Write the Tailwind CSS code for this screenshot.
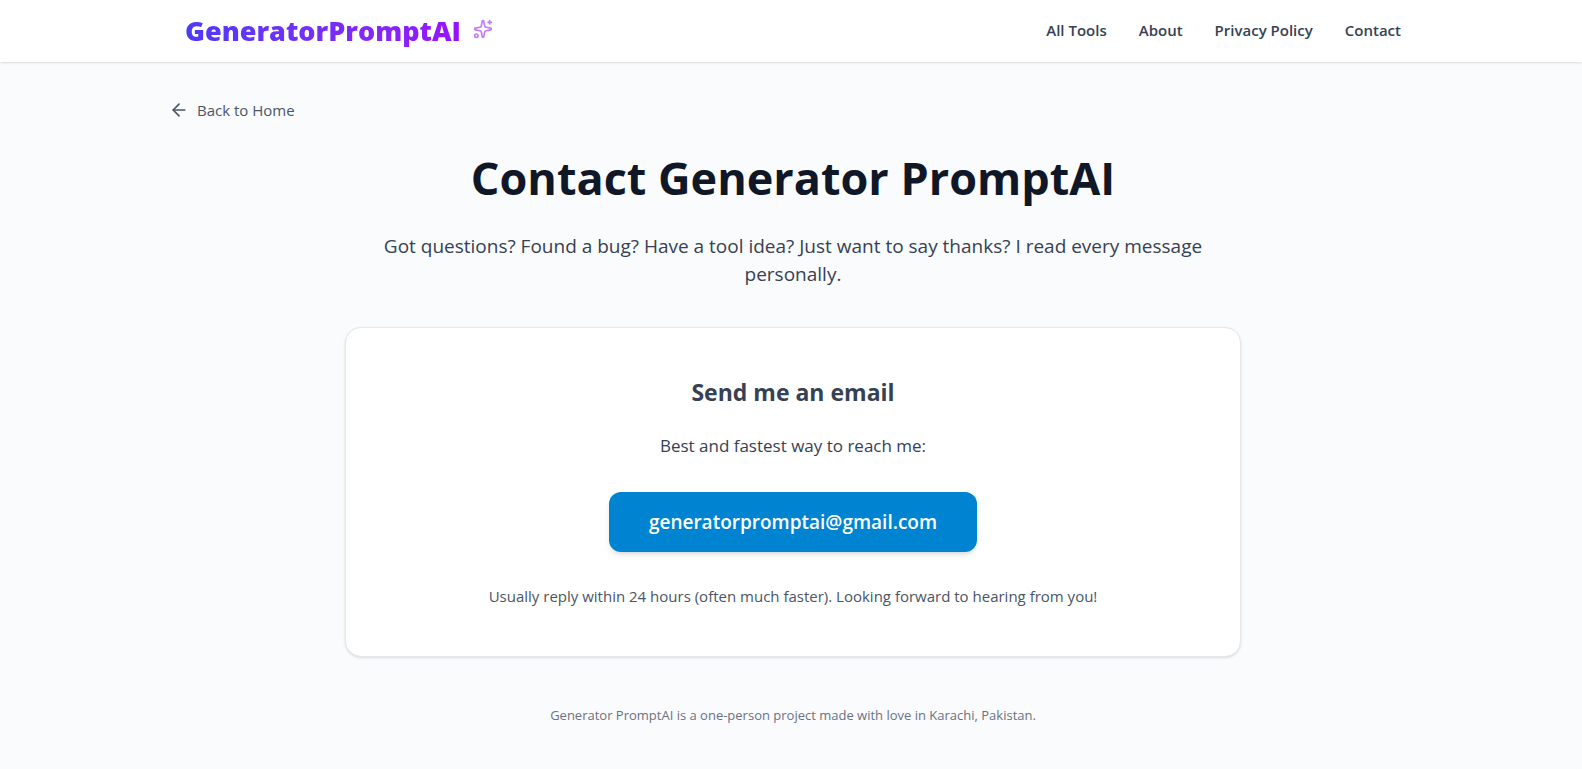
<!DOCTYPE html>
<html lang="en">
<head>
<meta charset="utf-8">
<meta name="viewport" content="width=device-width, initial-scale=1">
<title>Contact Generator PromptAI</title>
<script src="https://cdn.jsdelivr.net/npm/@tailwindcss/browser@4"></script>
</head>
<body class="min-h-screen bg-[#fafbfd] font-['Open_Sans','Noto_Sans',sans-serif] text-gray-700">
<header class="bg-white pl-1 shadow">
  <div class="mx-auto flex min-h-[62px] max-w-7xl items-center justify-between px-8">
    <a href="#" class="flex items-center gap-3">
      <span class="bg-linear-to-r from-indigo-600 to-purple-600 bg-clip-text text-[27px] leading-9 font-black text-transparent">GeneratorPromptAI</span>
      <svg class="mb-1 size-5 text-purple-400" viewBox="0 0 24 24" fill="none" stroke="currentColor" stroke-width="2" stroke-linecap="round" stroke-linejoin="round" aria-hidden="true">
        <path d="M11.017 2.814a1 1 0 0 1 1.966 0l1.051 5.558a2 2 0 0 0 1.594 1.594l5.558 1.051a1 1 0 0 1 0 1.966l-5.558 1.051a2 2 0 0 0-1.594 1.594l-1.051 5.558a1 1 0 0 1-1.966 0l-1.051-5.558a2 2 0 0 0-1.594-1.594l-5.558-1.051a1 1 0 0 1 0-1.966l5.558-1.051a2 2 0 0 0 1.594-1.594z"/>
        <path d="M20 2v4"/><path d="M22 4h-4"/><circle cx="4" cy="20" r="2"/>
      </svg>
    </a>
    <nav class="flex gap-8 pb-0.5 text-[15px] leading-6 font-semibold">
      <a href="#">All Tools</a>
      <a href="#">About</a>
      <a href="#">Privacy Policy</a>
      <a href="#">Contact</a>
    </nav>
  </div>
</header>
<main class="pt-9 pb-11 pl-1">
  <div class="mx-auto max-w-7xl px-4">
    <a href="#" class="inline-flex items-center gap-2 text-[15px] leading-6 text-gray-600">
      <svg class="size-5" viewBox="0 0 24 24" fill="none" stroke="currentColor" stroke-width="2" stroke-linecap="round" stroke-linejoin="round" aria-hidden="true"><path d="m12 19-7-7 7-7"/><path d="M19 12H5"/></svg>
      Back to Home
    </a>
  </div>
  <div class="mx-auto mt-7 max-w-4xl text-center">
    <h1 class="text-[45px] leading-12 font-bold text-gray-900">Contact Generator PromptAI</h1>
    <p class="mt-[30px] px-6 text-[19px] leading-7">Got questions? Found a bug? Have a tool idea? Just want to say thanks? I read every message personally.</p>
    <section class="mt-[39px] rounded-2xl border border-gray-200 bg-white p-12 shadow-sm">
      <h2 class="text-[23px] leading-8 font-bold text-gray-700">Send me an email</h2>
      <p class="mt-6 text-[17px] leading-7">Best and fastest way to reach me:</p>
      <a href="mailto:generatorpromptai@gmail.com" class="mt-8 inline-block rounded-xl bg-sky-600 px-10 py-4 text-[19px] leading-7 font-semibold text-white shadow-md">generatorpromptai@gmail.com</a>
      <p class="mt-8 text-[15px] leading-6 text-gray-600">Usually reply within 24 hours (often much faster). Looking forward to hearing from you!</p>
    </section>
    <p class="mt-12 text-[13px] leading-5 text-gray-500">Generator PromptAI is a one-person project made with love in Karachi, Pakistan.</p>
  </div>
</main>
</body>
</html>
